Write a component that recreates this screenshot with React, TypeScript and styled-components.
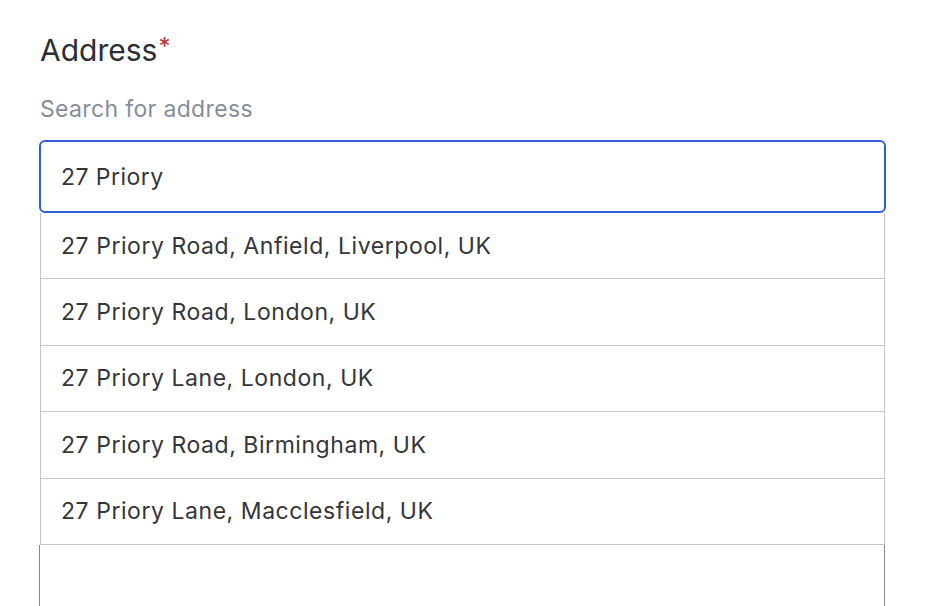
import React, { useState } from 'react';
import styled, { createGlobalStyle } from 'styled-components';

const GlobalStyle = createGlobalStyle`
  html, body {
    margin: 0;
    padding: 0;
    background: #ffffff;
  }
  body {
    font-family: Inter, "Noto Sans", "Liberation Sans", sans-serif;
    -webkit-font-smoothing: antialiased;
  }
`;

const Field = styled.div`
  width: 847px;
  padding: 23px 0 0 39px;
  display: flex;
  flex-direction: column;
`;

const Label = styled.label`
  font-size: 30px;
  line-height: 48px;
  color: #2b2f33;
  padding-left: 1px;
`;

const Required = styled.span`
  color: #b4322a;
  font-size: 24px;
  vertical-align: 6px;
  margin-left: 1px;
`;

const Hint = styled.div`
  margin-top: 20px;
  font-size: 23px;
  letter-spacing: 0.35px;
  line-height: 30px;
  color: #858e98;
  padding-left: 1px;
`;

const Input = styled.input`
  box-sizing: border-box;
  margin-top: 16px;
  width: 100%;
  height: 73px;
  border: 2px solid #2f5fd2;
  border-radius: 6px;
  padding: 0 20px;
  font-family: inherit;
  font-size: 23px;
  letter-spacing: 0.45px;
  color: #333639;
  outline: none;
  background: #fff;
`;

const Suggestions = styled.ul`
  list-style: none;
  margin: 0 1px;
  padding: 0;
  border-left: 1.5px solid #c4c4c4;
  border-right: 1.5px solid #c4c4c4;
`;

const Suggestion = styled.li`
  box-sizing: border-box;
  height: 66.4px;
  display: flex;
  align-items: center;
  padding: 0 20px;
  font-size: 23px;
  letter-spacing: 0.55px;
  color: #333639;
  border-bottom: 1.5px solid #c4c4c4;
  cursor: pointer;
`;

const Below = styled.div`
  margin: 0 1px 0 0;
  height: 80px;
  border-left: 1px solid #888888;
  border-right: 1px solid #888888;
`;

const results = [
  '27 Priory Road, Anfield, Liverpool, UK',
  '27 Priory Road, London, UK',
  '27 Priory Lane, London, UK',
  '27 Priory Road, Birmingham, UK',
  '27 Priory Lane, Macclesfield, UK',
];

export default function App() {
  const [query, setQuery] = useState('27 Priory');
  return (
    <>
      <GlobalStyle />
      <Field>
        <Label htmlFor="address">
          Address<Required>*</Required>
        </Label>
        <Hint>Search for address</Hint>
        <Input id="address" value={query} onChange={e => setQuery(e.target.value)} />
        <Suggestions>
          {results.map(r => (
            <Suggestion key={r} onClick={() => setQuery(r)}>
              {r}
            </Suggestion>
          ))}
        </Suggestions>
        <Below />
      </Field>
    </>
  );
}
